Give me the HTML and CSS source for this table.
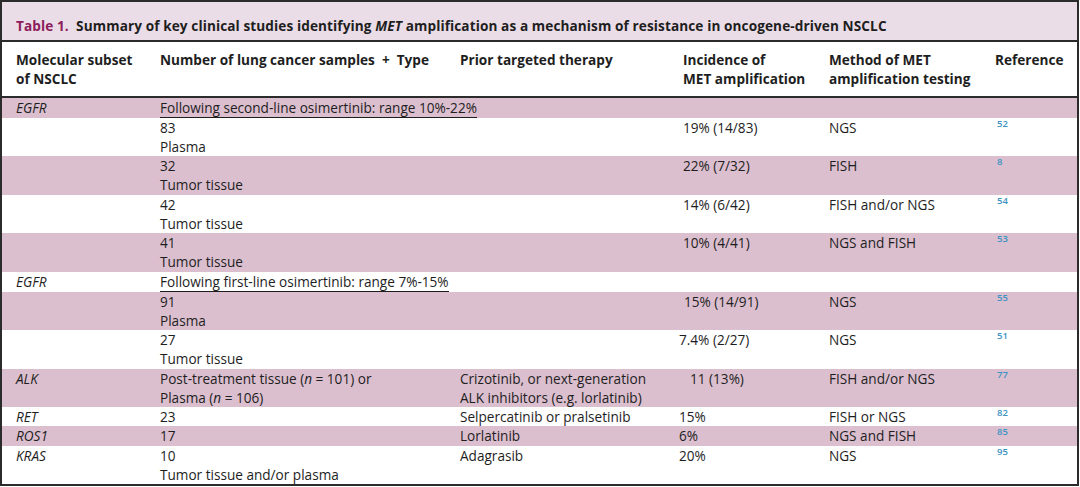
FILE: index.html
```html
<!DOCTYPE html>
<html>
<head>
<meta charset="utf-8">
<link rel="stylesheet" href="styles.css">
</head>
<body>
<div class="frame">
  <div class="title"><span class="label">Table 1.</span>&nbsp; Summary of key clinical studies identifying <i>MET</i> amplification as a mechanism of resistance in oncogene-driven NSCLC</div>
  <table class="data">
    <colgroup>
      <col class="c1"><col class="c2"><col class="c3"><col class="c4"><col class="c5"><col class="c6">
    </colgroup>
    <thead>
      <tr>
        <th class="first">Molecular subset<br>of NSCLC</th>
        <th>Number of lung cancer samples &nbsp;+ &nbsp;Type</th>
        <th>Prior targeted therapy</th>
        <th class="ind">Incidence of<br>MET amplification</th>
        <th>Method of MET<br>amplification testing</th>
        <th class="refh">Reference</th>
      </tr>
    </thead>
    <tbody>
      <tr class="pink">
        <td class="first"><i>EGFR</i></td>
        <td colspan="5"><span class="group">Following second-line osimertinib: range 10%-22%</span></td>
      </tr>
      <tr>
        <td class="first"></td>
        <td>83<br>Plasma</td>
        <td></td>
        <td class="ind">19% (14/83)</td>
        <td>NGS</td>
        <td><span class="ref">52</span></td>
      </tr>
      <tr class="pink">
        <td class="first"></td>
        <td>32<br>Tumor tissue</td>
        <td></td>
        <td class="ind">22% (7/32)</td>
        <td>FISH</td>
        <td><span class="ref">8</span></td>
      </tr>
      <tr>
        <td class="first"></td>
        <td>42<br>Tumor tissue</td>
        <td></td>
        <td class="ind">14% (6/42)</td>
        <td>FISH and/or NGS</td>
        <td><span class="ref">54</span></td>
      </tr>
      <tr class="pink">
        <td class="first"></td>
        <td>41<br>Tumor tissue</td>
        <td></td>
        <td class="ind">10% (4/41)</td>
        <td>NGS and FISH</td>
        <td><span class="ref">53</span></td>
      </tr>
      <tr>
        <td class="first"><i>EGFR</i></td>
        <td colspan="5"><span class="group">Following first-line osimertinib: range 7%-15%</span></td>
      </tr>
      <tr class="pink">
        <td class="first"></td>
        <td>91<br>Plasma</td>
        <td></td>
        <td class="ind2">15% (14/91)</td>
        <td>NGS</td>
        <td><span class="ref">55</span></td>
      </tr>
      <tr>
        <td class="first"></td>
        <td>27<br>Tumor tissue</td>
        <td></td>
        <td>7.4% (2/27)</td>
        <td>NGS</td>
        <td><span class="ref">51</span></td>
      </tr>
      <tr class="pink">
        <td class="first"><i>ALK</i></td>
        <td>Post-treatment tissue (<i>n</i> = 101) or<br>Plasma (<i>n</i> = 106)</td>
        <td>Crizotinib, or next-generation<br>ALK inhibitors (e.g. lorlatinib)</td>
        <td class="ind3">11 (13%)</td>
        <td>FISH and/or NGS</td>
        <td><span class="ref">77</span></td>
      </tr>
      <tr>
        <td class="first"><i>RET</i></td>
        <td>23</td>
        <td>Selpercatinib or pralsetinib</td>
        <td>15%</td>
        <td>FISH or NGS</td>
        <td><span class="ref">82</span></td>
      </tr>
      <tr class="pink">
        <td class="first"><i>ROS1</i></td>
        <td>17</td>
        <td>Lorlatinib</td>
        <td>6%</td>
        <td>NGS and FISH</td>
        <td><span class="ref">85</span></td>
      </tr>
      <tr>
        <td class="first"><i>KRAS</i></td>
        <td>10<br>Tumor tissue and/or plasma</td>
        <td>Adagrasib</td>
        <td>20%</td>
        <td>NGS</td>
        <td><span class="ref">95</span></td>
      </tr>
    </tbody>
  </table>
</div>
</body>
</html>
```
FILE: styles.css
```css
html, body {
  margin: 0;
  padding: 0;
  background: #ffffff;
}

body {
  font-family: "Open Sans", Lato, sans-serif;
  font-size: 13.6px;
  color: #1e1e1e;
}

.frame {
  width: 1075px;
  border: 2px solid #2b2b2b;
  background: #ffffff;
}

.title {
  height: 40px;
  box-sizing: border-box;
  padding: 14px 0 0 14px;
  background: #ebdde7;
  border-bottom: 2px solid #2b2b2b;
  font-weight: 700;
  line-height: 19px;
  letter-spacing: 0.1px;
  white-space: nowrap;
}

.title .label {
  color: #8c1c5b;
}

.data {
  width: 100%;
  border-collapse: collapse;
  table-layout: fixed;
  line-height: 19.25px;
}

.c1 { width: 158px; }
.c2 { width: 300px; }
.c3 { width: 219px; }
.c4 { width: 150px; }
.c5 { width: 166px; }
.c6 { width: 82px; }

.data th {
  text-align: left;
  vertical-align: top;
  font-weight: 700;
  padding: 8px 0 7px 0;
  height: 38px;
  border-bottom: 2px solid #2b2b2b;
  white-space: nowrap;
}

.data td {
  padding: 0;
  vertical-align: top;
  white-space: nowrap;
}

.data .first {
  padding-left: 14px;
}

.data .ind { padding-left: 4px; }
.data .ind2 { padding-left: 5px; }
.data .ind3 { padding-left: 11px; }

.pink td {
  background: #dbbfce;
}

.group {
  display: inline-block;
  line-height: 18px;
  border-bottom: 1.5px solid #1e1e1e;
}

.ref {
  display: inline-block;
  color: #3d93c4;
  font-size: 9.5px;
  font-weight: 600;
  line-height: 10px;
  padding-left: 2px;
  vertical-align: top;
  margin-top: 1px;
}
```
